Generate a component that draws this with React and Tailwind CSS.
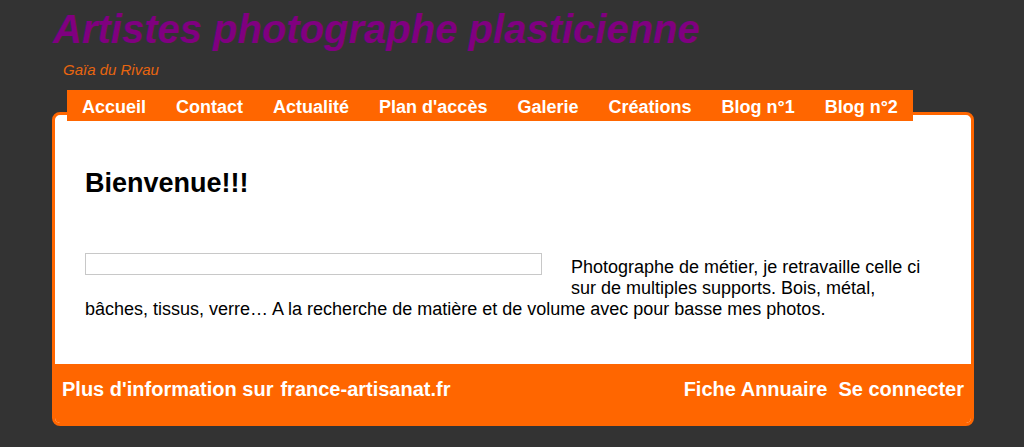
const navItems = ['Accueil', 'Contact', 'Actualité', "Plan d'accès", 'Galerie', 'Créations', 'Blog n°1', 'Blog n°2'];

const App = () => {
  return (
    <div className="min-h-screen bg-[#333333] font-['Liberation_Sans',Arial,sans-serif]">
      <div className="w-[922px] ml-[52px] pt-[6px]">
        {/* Header */}
        <h1 className="pl-[1px] text-[40px] leading-[47px] font-bold italic text-[#800080]">
          Artistes photographe plasticienne
        </h1>
        <p className="mt-[8px] pl-[11px] text-[15px] leading-[17px] italic text-[#e8650f]">Gaïa du Rivau</p>

        {/* Menu */}
        <nav className="relative z-10 mt-[12px] ml-[15px] flex w-fit bg-[#ff6600]">
          {navItems.map((item) => (
            <a key={item} href="#" className="px-[15px] pt-[7px] pb-[3px] text-[18px] leading-[21px] font-bold text-white">
              {item}
            </a>
          ))}
        </nav>

        {/* Card */}
        <div className="-mt-[9px] rounded-[8px] border-[3px] border-[#ff6600] bg-white overflow-hidden">
          <div className="px-[30px] pt-[53px] pb-[44px] text-black">
            <h2 className="text-[27px] leading-[31px] font-bold">Bienvenue!!!</h2>
            <div className="mt-[58px] text-[18px] leading-[21px]">
              <div className="float-left -mt-[4px] mr-[29px] mb-[10px] h-[22px] w-[457px] border border-[#c8c8c8] bg-white" />
              Photographe de métier, je retravaille celle ci sur de multiples supports. Bois, métal, bâches, tissus, verre… A la recherche de matière et de volume avec pour basse mes photos.
            </div>
          </div>
          <div className="flex h-[59px] justify-between bg-[#ff6600] px-[7px] pt-[14px] text-[20px] leading-[23px] font-bold text-white">
            <div className="flex gap-[7px]">
              <span>Plus d'information sur</span>
              <a href="#">france-artisanat.fr</a>
            </div>
            <div className="flex gap-[11px]">
              <a href="#">Fiche Annuaire</a>
              <a href="#">Se connecter</a>
            </div>
          </div>
        </div>
      </div>
    </div>
  );
};

export default App;
